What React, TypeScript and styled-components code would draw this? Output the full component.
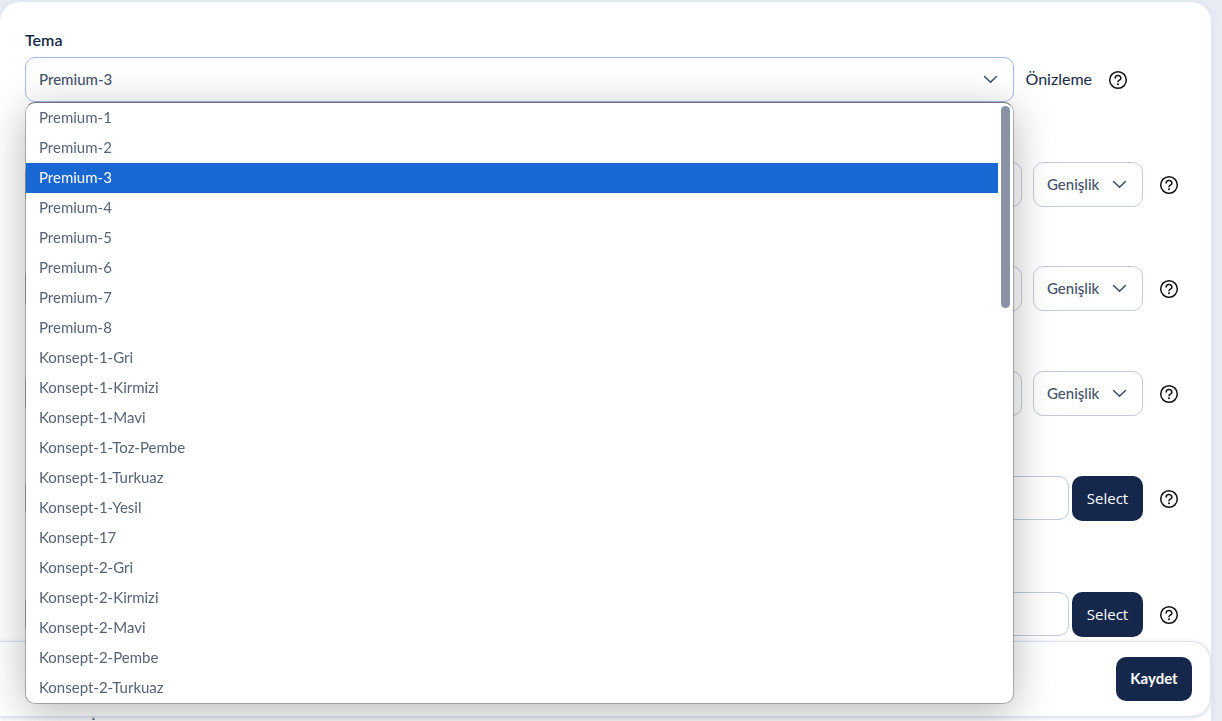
import React from "react";
import styled, { createGlobalStyle } from "styled-components";

const Global = createGlobalStyle`
  * { box-sizing: border-box; }
  body {
    margin: 0;
    background: #e9ecf5;
    font-family: Lato, "Open Sans", sans-serif;
    font-size: 15px;
    color: #16284b;
  }
  button, input, select { font: inherit; }
`;

const Page = styled.div`
  padding: 2px 11px 0 0;
`;

const Card = styled.form`
  background: #fff;
  border-radius: 20px 20px 0 0;
  box-shadow: 0 0 9px #d9deea;
  padding: 29px 32px 0 25px;
`;

const Field = styled.div<{ $space?: number }>`
  display: flex;
  flex-direction: column;
  gap: 8px;
  margin-bottom: ${(p) => p.$space ?? 34}px;
`;

const Label = styled.label`
  min-height: 18px;
  line-height: 18px;
  font-size: 16px;
  font-weight: 600;
`;

const Row = styled.div<{ $end?: number }>`
  display: flex;
  align-items: center;
  height: 45px;
  padding-right: ${(p) => p.$end ?? 0}px;
`;

const SelectWrap = styled.div<{ $grow?: boolean }>`
  position: relative;
  flex: ${(p) => (p.$grow ? "1" : "0 0 110px")};
  height: 45px;
`;

const SelectBox = styled.select<{ $focus?: boolean }>`
  appearance: none;
  width: 100%;
  height: 100%;
  padding: 0 13px 2px;
  border: 1px solid ${(p) => (p.$focus ? "#a3b8f8" : "#c3cbd9")};
  border-radius: 10px;
  background: #fff;
  color: #45536b;
  font-weight: 500;
  outline: none;
`;

const Chevron = styled.svg`
  position: absolute;
  right: 16px;
  top: 18px;
  width: 15px;
  height: 9px;
  pointer-events: none;
`;

const TextInput = styled.input`
  flex: 1;
  min-width: 0;
  height: 44px;
  align-self: flex-start;
  padding: 0 13px;
  border: 1px solid #c3cbd9;
  border-radius: 10px;
  outline: none;
`;

const WidthInput = styled(TextInput)`
  height: 45px;
`;

const PreviewLink = styled.a`
  margin-left: 12px;
  padding-bottom: 2px;
  font-size: 16px;
  color: #16284b;
  text-decoration: none;
`;

const HelpButton = styled.button`
  display: flex;
  margin-left: 16px;
  padding: 0;
  border: 0;
  background: none;
  color: #111;
`;

const DarkButton = styled.button<{ $width: number }>`
  width: ${(p) => p.$width}px;
  height: 45px;
  padding: 0 0 2px;
  border: 0;
  border-radius: 10px;
  background: #15284b;
  color: #fff;
`;

const PickButton = styled(DarkButton)`
  margin-left: 3px;
  font-family: "Open Sans", sans-serif;
`;

const Gap = styled.span`
  width: 11px;
`;

const Menu = styled.div`
  position: absolute;
  z-index: 3;
  top: 45px;
  left: 0;
  right: 0;
  display: flex;
  border: 1px solid rgba(0, 0, 0, 0.25);
  border-top-color: rgba(0, 0, 0, 0.5);
  border-radius: 10px;
  background: #fff;
  background-clip: padding-box;
  box-shadow: 0 8px 40px rgba(0, 0, 0, 0.28);
  overflow: hidden;
`;

const Options = styled.ul`
  flex: 1;
  margin: 0;
  padding: 0;
  list-style: none;
`;

const Option = styled.li`
  height: 30px;
  padding: 0 13px;
  line-height: 28px;
  color: #566377;
  &[aria-selected="true"] {
    background: #1967d2;
    color: #fff;
  }
`;

const Track = styled.div`
  width: 15px;
  padding: 3px;
`;

const Thumb = styled.div`
  width: 9px;
  height: 202px;
  border-radius: 5px;
  background: #8a92a6;
`;

const SaveBar = styled.div`
  position: fixed;
  z-index: 2;
  left: 0;
  right: 11px;
  bottom: 4px;
  display: flex;
  justify-content: flex-end;
  padding: 15px 18px;
  border: 1px solid #dfe3ee;
  border-left: 0;
  border-radius: 0 20px 20px 0;
  background: #fff;
  box-shadow: 0 1px 4px #d9deea;
`;

const SaveButton = styled(DarkButton)`
  height: 44px;
  font-weight: 700;
`;

const NextLabel = styled.div`
  height: 19px;
  padding-left: 65px;
  line-height: 18px;
`;

const Arrow = () => (
  <Chevron viewBox="0 0 15 9" fill="none" stroke="#34466b" strokeWidth="1.4" strokeLinecap="round" strokeLinejoin="round">
    <path d="M1.5 1.5 7.5 7.3 13.5 1.5" />
  </Chevron>
);

const Help = () => (
  <HelpButton type="button" aria-label="Yardım">
    <svg width="20" height="20" viewBox="0 0 20 20" fill="none" stroke="currentColor" strokeWidth="1.5" strokeLinecap="round">
      <circle cx="10" cy="10" r="8.3" />
      <path d="M7.2 8.1a2.8 2.5 0 1 1 4.2 2.1c-.9.5-1.4.8-1.4 1.5" />
      <circle cx="10" cy="14.2" r="1" fill="currentColor" stroke="none" />
    </svg>
  </HelpButton>
);

const themes = [
  "Premium-1", "Premium-2", "Premium-3", "Premium-4", "Premium-5",
  "Premium-6", "Premium-7", "Premium-8", "Konsept-1-Gri", "Konsept-1-Kirmizi",
  "Konsept-1-Mavi", "Konsept-1-Toz-Pembe", "Konsept-1-Turkuaz", "Konsept-1-Yesil", "Konsept-17",
  "Konsept-2-Gri", "Konsept-2-Kirmizi", "Konsept-2-Mavi", "Konsept-2-Pembe", "Konsept-2-Turkuaz",
];

const SizeField = ({ id, space }: { id: string; space?: number }) => (
  <Field $space={space}>
    <Label htmlFor={id} />
    <Row>
      <WidthInput id={id} />
      <Gap />
      <SelectWrap>
        <SelectBox aria-label="Genişlik">
          <option>Genişlik</option>
        </SelectBox>
        <Arrow />
      </SelectWrap>
      <Help />
    </Row>
  </Field>
);

const FileField = ({ id, space }: { id: string; space: number }) => (
  <Field $space={space}>
    <Label htmlFor={id} />
    <Row>
      <TextInput id={id} />
      <PickButton type="button" $width={71}>Select</PickButton>
      <Help />
    </Row>
  </Field>
);

export default function App() {
  return (
    <Page>
      <Global />
      <Card>
        <Field>
          <Label htmlFor="theme">Tema</Label>
          <Row $end={51}>
            <SelectWrap $grow>
              <SelectBox id="theme" $focus defaultValue="Premium-3">
                {themes.map((t) => (
                  <option key={t}>{t}</option>
                ))}
              </SelectBox>
              <Arrow />
              <Menu>
                <Options role="listbox" aria-label="Tema">
                  {themes.map((t) => (
                    <Option key={t} role="option" aria-selected={t === "Premium-3"}>{t}</Option>
                  ))}
                </Options>
                <Track>
                  <Thumb />
                </Track>
              </Menu>
            </SelectWrap>
            <PreviewLink href="#">Önizleme</PreviewLink>
            <Help />
          </Row>
        </Field>
        <SizeField id="size-1" space={33} />
        <SizeField id="size-2" />
        <SizeField id="size-3" />
        <FileField id="file-1" space={45} />
        <FileField id="file-2" space={65} />
        <NextLabel>ş</NextLabel>
      </Card>
      <SaveBar>
        <SaveButton type="submit" $width={76}>Kaydet</SaveButton>
      </SaveBar>
    </Page>
  );
}
